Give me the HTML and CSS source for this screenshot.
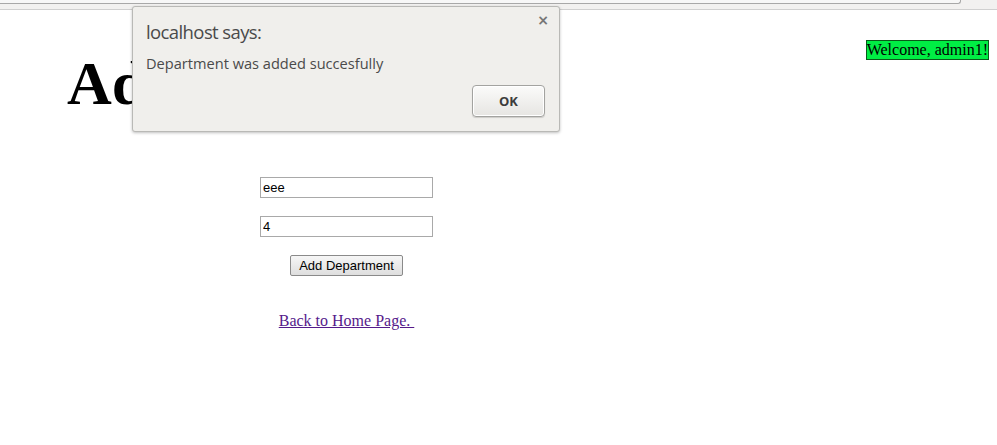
FILE: index.html
```html
<!DOCTYPE html>
<html>
<head>
<meta charset="utf-8">
<title>Add Department</title>
<link rel="stylesheet" href="styles.css">
</head>
<body>
<div class="toolbar"><div class="urlbar"></div></div>
<div class="page">
  <div class="welcome">Welcome, admin1!</div>
  <h1 class="title">Add Department</h1>
  <div class="column">
    <form class="form">
      <input class="field" type="text" value="eee">
      <input class="field" type="text" value="4">
      <button class="submit" type="button">Add Department</button>
    </form>
    <a class="back" href="#">Back to Home Page. </a>
  </div>
</div>

<div class="dialog">
  <span class="close">×</span>
  <div class="dlg-title">localhost says:</div>
  <div class="dlg-msg">Department was added succesfully</div>
  <div class="dlg-actions"><button class="ok" type="button">OK</button></div>
</div>
</body>
</html>
```
FILE: styles.css
```css
html, body { margin: 0; padding: 0; background: #fff; }
body { font-family: "Liberation Serif", serif; font-size: 16px; color: #000; }

.toolbar {
  height: 9px;
  background: #f2f1f0;
  border-bottom: 1px solid #d0d0d0;
}
.urlbar {
  width: 960px;
  height: 3px;
  background: #f7f7f7;
  border-bottom: 1px solid #a8a8a8;
  border-right: 1px solid #a8a8a8;
  border-bottom-right-radius: 3px;
}

.page { padding: 0 8px; }
.welcome {
  float: right;
  margin-top: 30px;
  background: #00ee44;
  border: 1px solid #0a5a1a;
  padding: 0;
  line-height: 18px;
  font-size: 16px;
}
.title {
  margin: 0;
  padding: 36px 0 0 59px;
  font-size: 62px;
  font-weight: bold;
  line-height: 74px;
}
.column {
  width: 677px;
  text-align: center;
  padding-top: 57px;
}
.form {
  display: flex;
  flex-direction: column;
  align-items: center;
  gap: 18px;
  margin: 0;
}
.field {
  box-sizing: border-box;
  width: 173px;
  height: 21px;
  border: 1px solid #a9a9a9;
  border-radius: 0;
  padding: 1px 2px;
  font-family: "Liberation Sans", sans-serif;
  font-size: 13px;
  color: #000;
  background: #fff;
  margin: 0;
}
.submit {
  box-sizing: border-box;
  width: 113px;
  height: 21px;
  margin: 0;
  padding: 0 6px;
  border: 1px solid #8a8a8a;
  border-radius: 2px;
  background: linear-gradient(#f6f6f6, #dedede);
  font-family: "Liberation Sans", sans-serif;
  font-size: 13px;
  color: #000;
}
.back {
  display: inline-block;
  margin-top: 36px;
  color: #551a8b;
  font-size: 16px;
  white-space: pre;
}

.dialog {
  position: absolute;
  left: 132px;
  top: 6px;
  box-sizing: border-box;
  width: 428px;
  height: 126px;
  background: #f0efec;
  border: 1px solid #b9b9b6;
  border-radius: 3px;
  box-shadow: 0 1px 3px rgba(0,0,0,0.25);
  padding: 13px 14px 14px 13px;
  font-family: "Open Sans", "DejaVu Sans", sans-serif;
  color: #4a4a4a;
}
.close {
  position: absolute;
  right: 10px;
  top: 5px;
  font-size: 14px;
  font-weight: bold;
  color: #777;
  font-family: "DejaVu Sans", sans-serif;
}
.dlg-title {
  font-size: 18.5px;
  line-height: 24px;
  letter-spacing: -0.6px;
}
.dlg-msg {
  font-size: 14.6px;
  line-height: 20px;
  margin-top: 9px;
  letter-spacing: 0;
}
.dlg-actions {
  display: flex;
  justify-content: flex-end;
  margin-top: 12px;
}
.ok {
  box-sizing: border-box;
  width: 73px;
  height: 32px;
  border: 1px solid #a3a3a0;
  border-radius: 4px;
  background: linear-gradient(#fbfbfa, #e6e5e2);
  box-shadow: 0 1px 1px rgba(0,0,0,0.15), inset 0 0 0 1px #fff;
  font-family: "Open Sans", "DejaVu Sans", sans-serif;
  font-weight: bold;
  font-size: 13px;
  color: #3c3c3c;
  margin: 0;
}
```
